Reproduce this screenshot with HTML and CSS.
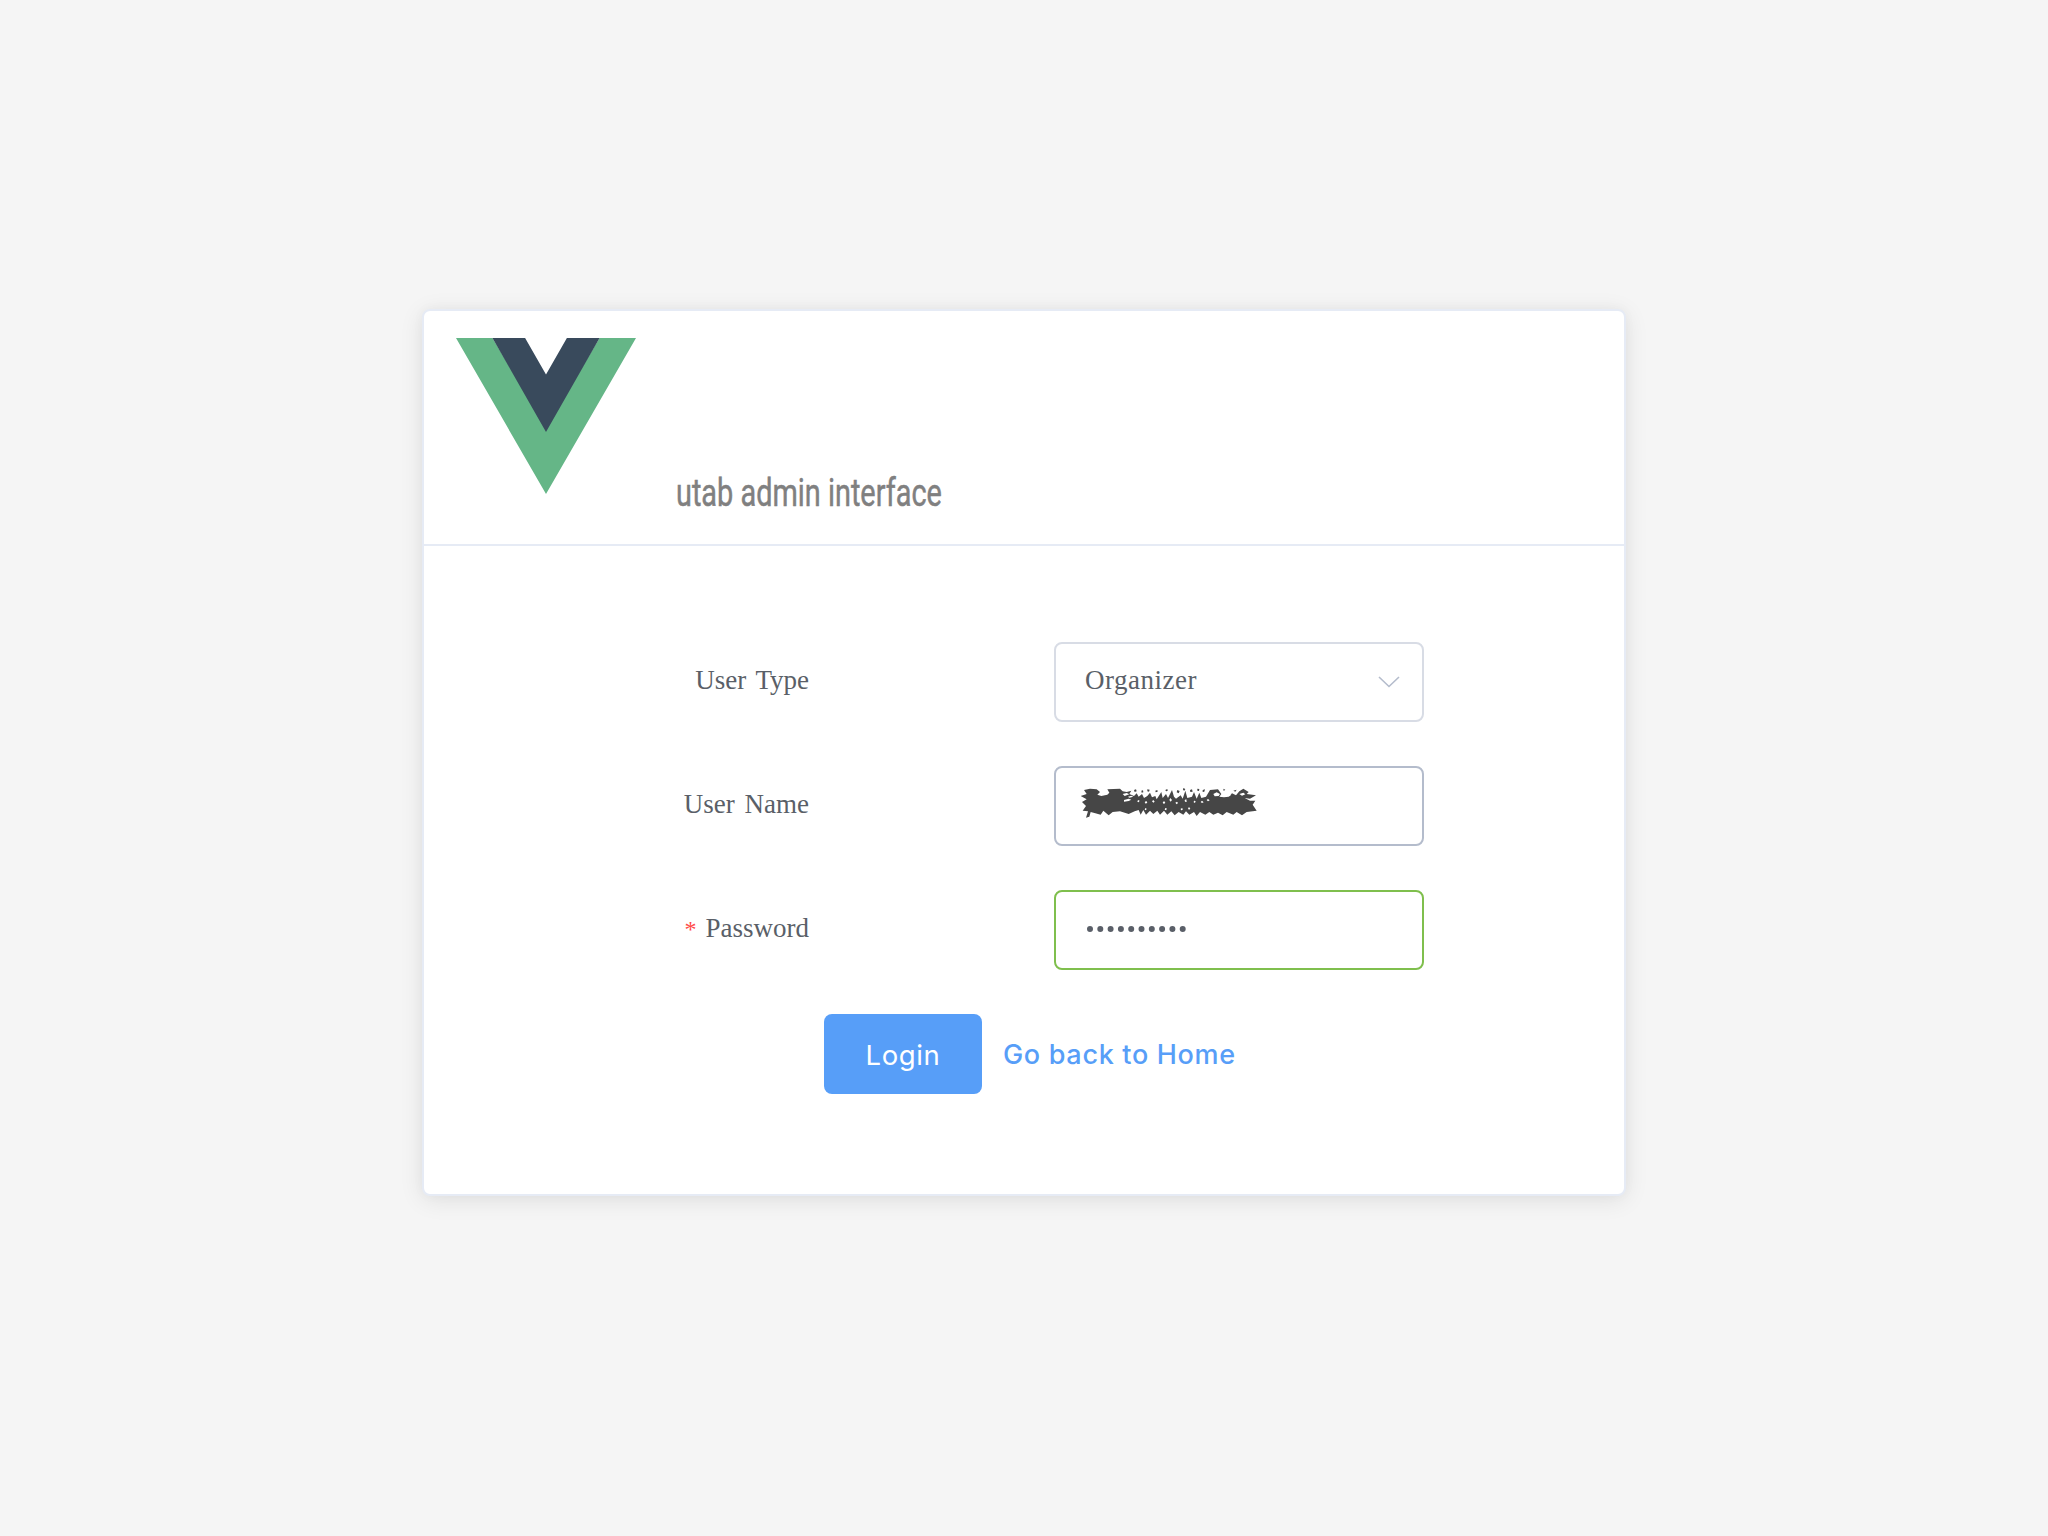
FILE: index.html
```
<!DOCTYPE html>
<html lang="en">
<head>
<meta charset="utf-8">
<title>utab admin interface</title>
<link rel="stylesheet" href="styles.css">
</head>
<body>
<main class="card">
  <header class="card-header">
    <svg class="logo" viewBox="0 0 168 156" preserveAspectRatio="none" aria-hidden="true">
      <path fill="#65b687" d="M0 0H34L84 90L134 0H168L84 156Z"/>
      <path fill="#394a5c" d="M34 0H64.500L84 36.500L103.500 0H134L84 94Z"/>
    </svg>
    <h1 class="title">utab admin interface</h1>
  </header>
  <form class="form">
    <div class="row">
      <label class="label type">User Type</label>
      <div class="field select">
        <span class="value">Organizer</span>
        <svg class="caret" viewBox="0 0 22 12"><path d="M1 1L11 10.500L21 1"/></svg>
      </div>
    </div>
    <div class="row">
      <label class="label name">User Name</label>
      <div class="field active">
        <svg class="scribble" viewBox="0 0 600 180">
          <path fill="#464646" d="M42 60L60 56L80 58L90 66L82 74L94 78L112 74L118 68L112 58L150 56L158 64L170 66L184 62L178 72L192 78L200 70L206 80L216 72L222 84L232 78L240 68L246 82L256 78L260 88L274 66L278 84L288 72L294 84L306 60L312 80L318 86L332 76L338 86L346 62L352 84L366 80L372 66L380 86L388 68L394 84L408 80L420 60L444 58L454 72L448 80L462 82L476 80L486 70L498 76L508 64L520 56L536 66L530 72L558 76L540 86L524 84L540 92L556 92L548 104L560 122L530 126L516 136L500 126L490 134L470 126L458 136L444 128L430 134L418 126L406 134L390 126L380 138L372 126L358 134L348 124L340 134L326 126L314 136L304 124L292 134L282 122L270 134L262 122L250 132L240 122L228 134L220 120L212 134L206 120L194 124L176 132L150 124L128 126L116 136L100 122L92 134L76 130L62 126L58 140L48 143L54 124L38 122L48 108L36 96L50 88L32 78L50 72Z"/>
          <path fill="#464646" d="M192 60l6-2 2 6-6 2zM214 62l5-1 1 6-5 1zM232 58l7 1-2 6-5-1zM256 62l6-2 1 5-6 2zM286 60l6-3 1 6-5 1zM322 60l7 3-3 7-6-3zM340 54l6 3-3 5-4-2zM360 60l6-2 2 7-7 1zM382 56l6 1-1 6-5-1zM398 60l7-2-2 7-5 1zM460 56l6 3-5 4zM490 62l10-3-4 6z"/>
          <path fill="#fff" d="M94 68l10-3 8 3-8 4zM158 72l12-3 8 4-14 5zM162 90l14-4 8 3-8 4-14 2zM174 80l10-3 6 3-12 3zM204 90l5 2-3 5-4-2zM224 96l5-3 3 5-5 3zM246 94l4-4 4 5-4 3zM278 96l5-2 3 5-5 3zM298 90l3-6 5 6-4 5zM316 98l5-3 3 4-4 4zM344 90l5-2 1 8-5-1zM372 92l5 1-2 6-4-2zM392 96l4-4 5 5-5 2zM410 90l4-3 5 4-5 3zM430 72l10-5 10 5-4 6-12 1zM466 76l8-5 10 3-6 5zM508 72l12-4 6 5-10 4zM226 114l4 2-2 5-4-2zM286 114l4 1-1 6-5-2zM332 116l5-2 1 6-5 1zM356 112l5 2-3 5-4-2z"/>
        </svg>
      </div>
    </div>
    <div class="row">
      <label class="label pass"><span class="star">*</span>Password</label>
      <div class="field valid">
        <svg class="dots" viewBox="0 0 100 8"><path d="M4 4H98"/></svg>
      </div>
    </div>
    <div class="actions">
      <button type="button" class="login">Login</button>
      <a class="home">Go back to Home</a>
    </div>
  </form>
</main>
</body>
</html>
```
FILE: styles.css
```
* { box-sizing: border-box; }
body {
  margin: 0;
  height: 1536px;
  padding-top: 309px;
  background: #f5f5f5;
  font-family: "Liberation Serif", serif;
  font-size: 27px;
  color: #5a5f68;
}
.card {
  width: 1204px;
  height: 887px;
  margin: 0 auto;
  border: 2px solid #e6ebf5;
  border-radius: 8px;
  background: #fff;
  box-shadow: 0 4px 24px rgba(0, 0, 0, .09), 0 0 12px rgba(0, 0, 0, .03);
}
.card-header {
  display: flex;
  height: 235px;
  padding: 27px 0 0 29px;
  border-bottom: 2px solid #e6ebf5;
}
.logo { width: 180px; height: 156px; margin-left: 3px; }
.title {
  margin: 133px 0 0 40px;
  height: 44px;
  font: 400 38px/44px Roboto, sans-serif;
  color: #808080;
  white-space: nowrap;
  -webkit-text-stroke: .5px #808080;
  transform: scaleX(.76);
  transform-origin: left;
}
.form {
  display: flex;
  flex-direction: column;
  gap: 44px;
  padding-top: 96px;
}
.row { display: flex; height: 80px; }
.label {
  width: 385px;
  text-align: right;
  line-height: 76px;
  white-space: nowrap;
}
.type { word-spacing: 3px; }
.name { word-spacing: 3px; }
.star { margin-right: 9px; font-size: 24px; color: #ff4949; }
.field {
  display: flex;
  width: 370px;
  height: 80px;
  margin-left: 245px;
  padding: 0 22px 0 29px;
  border: 2px solid #d8dce5;
  border-radius: 8px;
}
.select { justify-content: space-between; }
.active { border-color: #b4bccc; padding-left: 14px; }
.valid { border-color: #7fbf4d; }
.value { line-height: 72px; letter-spacing: .5px; }
.caret {
  width: 22px;
  height: 12px;
  margin-top: 32px;
  fill: none;
  stroke: #b4bccc;
  stroke-width: 1.6;
}
.scribble { width: 200px; height: 60px; margin-top: 2px; }
.dots {
  width: 100px;
  height: 8px;
  margin-top: 33px;
  margin-left: 1px;
  fill: none;
  stroke: #5a5f68;
  stroke-width: 6;
  stroke-linecap: round;
  stroke-dasharray: 0 10.3;
  overflow: visible;
}
.actions {
  display: flex;
  gap: 21px;
  padding-left: 400px;
  font-family: Inter, sans-serif;
  line-height: 82px;
}
.login {
  width: 158px;
  height: 80px;
  padding: 0;
  border: 0;
  border-radius: 8px;
  background: #579ef8;
  color: #fff;
  font: 400 27.5px/82px Inter, sans-serif;
  letter-spacing: .6px;
}
.home { color: #579ef8; font-weight: 500; letter-spacing: .68px; white-space: nowrap; }
```
